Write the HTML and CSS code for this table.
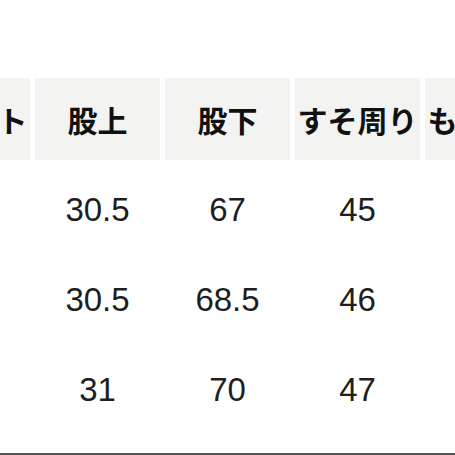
FILE: index.html
```html
<!DOCTYPE html>
<html lang="ja">
<head>
<meta charset="utf-8">
<link rel="stylesheet" href="styles.css">
</head>
<body>
<div class="frame">
  <div class="table">
    <div class="th">ウエスト</div>
    <div class="th">股上</div>
    <div class="th">股下</div>
    <div class="th">すそ周り</div>
    <div class="th">もも周り</div>

    <div class="td"></div>
    <div class="td">30.5</div>
    <div class="td">67</div>
    <div class="td">45</div>
    <div class="td"></div>

    <div class="td"></div>
    <div class="td">30.5</div>
    <div class="td">68.5</div>
    <div class="td">46</div>
    <div class="td"></div>

    <div class="td"></div>
    <div class="td">31</div>
    <div class="td">70</div>
    <div class="td">47</div>
    <div class="td"></div>
  </div>
  <div class="rule"></div>
</div>
</body>
</html>
```
FILE: styles.css
```css
html, body {
  margin: 0;
  padding: 0;
  background: #ffffff;
}
body {
  width: 455px;
  height: 455px;
  overflow: hidden;
  font-family: "Noto Sans CJK JP", "Noto Sans", sans-serif;
  color: #1a1a1a;
}
.frame {
  width: 455px;
  height: 455px;
  overflow: hidden;
  display: flex;
  flex-direction: column;
}
.table {
  margin-top: 78px;
  margin-left: -95px;
  display: grid;
  grid-template-columns: repeat(5, 125px);
  grid-template-rows: 82px repeat(3, 90px);
  column-gap: 5px;
  row-gap: 0;
  width: max-content;
}
.th {
  background: #f3f3f1;
  font-weight: 700;
  font-size: 30px;
  display: flex;
  align-items: center;
  justify-content: center;
  white-space: nowrap;
  color: #111;
}
.td {
  font-family: "Liberation Sans", "Noto Sans CJK JP", sans-serif;
  font-size: 33px;
  font-weight: 400;
  display: flex;
  align-items: center;
  justify-content: center;
  margin-top: 5px;
  padding-top: 4px;
  color: #1e1e1e;
}
.rule {
  margin-top: auto;
  height: 2px;
  background: #555;
}
```
